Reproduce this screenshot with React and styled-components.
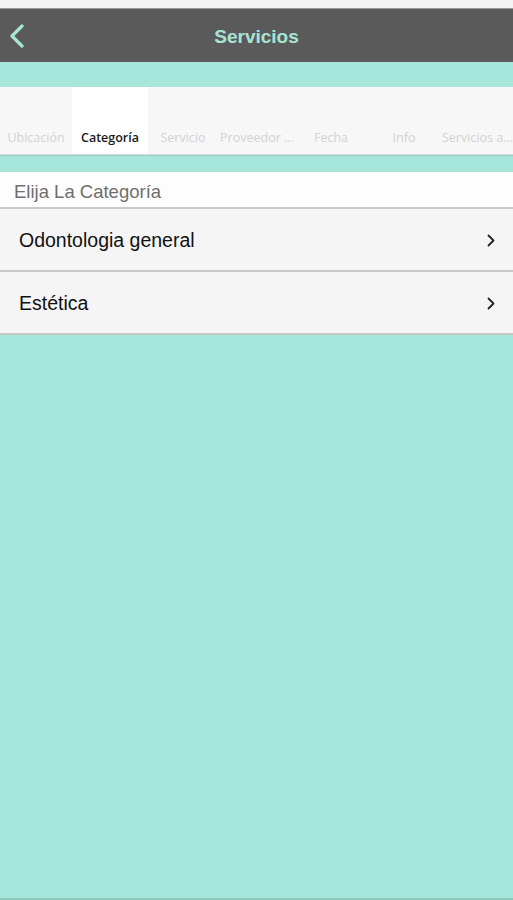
import React from "react";
import styled, { createGlobalStyle } from "styled-components";

const Global = createGlobalStyle`
  html, body { margin: 0; padding: 0; background: #f6f6f6; }
  body { font-family: "Liberation Sans", Arial, sans-serif; }
  * { box-sizing: border-box; }
`;

const Screen = styled.div`
  width: 513px;
  height: 900px;
  display: flex;
  flex-direction: column;
  background: #f6f6f6;
  overflow: hidden;
`;

const StatusStrip = styled.div`
  height: 9px;
  background: #f4f4f4;
  border-bottom: 1px solid #9a9a9a;
`;

const NavBar = styled.div`
  height: 53px;
  background: #5a5a5a;
  display: grid;
  grid-template-columns: 60px 1fr 60px;
  align-items: center;
`;

const BackButton = styled.div`
  display: flex;
  align-items: center;
  padding-left: 9px;
  height: 100%;
`;

const Title = styled.div`
  text-align: center;
  color: #a6e4d6;
  font-size: 19px;
  font-weight: bold;
  padding-top: 2px;
`;

const Body = styled.div`
  flex: 1;
  background: #a7e6db;
  display: flex;
  flex-direction: column;
  border-bottom: 2px solid #8fc9bd;
`;

const Spacer = styled.div`
  height: ${(p) => p.h}px;
`;

const TabStrip = styled.div`
  height: 68px;
  background: #f7f7f7;
  display: flex;
  border-bottom: 1px solid #d6d6d6;
  box-shadow: 0 1px 1px rgba(0, 0, 0, 0.08);
`;

const Tab = styled.div`
  width: ${(p) => p.w}px;
  flex: none;
  background: ${(p) => (p.active ? "#ffffff" : "transparent")};
  display: flex;
  align-items: flex-end;
  justify-content: center;
  padding-bottom: 8px;
  font-family: "Open Sans", "Liberation Sans", sans-serif;
  font-size: 12.5px;
  font-weight: ${(p) => (p.active ? 600 : 400)};
  color: ${(p) => (p.active ? "#1a1a1a" : "#d2d2d2")};
  white-space: nowrap;
  overflow: hidden;
`;

const SectionHeader = styled.div`
  height: 37px;
  background: #fdfdfd;
  border-bottom: 2px solid #c9c9c9;
  display: flex;
  align-items: center;
  padding-left: 14px;
  font-size: 18.5px;
  color: #6f6f6f;
  padding-top: 4px;
`;

const Row = styled.div`
  height: 63px;
  background: #f5f5f5;
  border-bottom: 2px solid #c8c8c8;
  display: flex;
  align-items: center;
  justify-content: space-between;
  padding: 1px 18px 0 19px;
  font-size: 19.5px;
  color: #111;
`;

const Chevron = ({ color = "#222", w = 8, h = 13, sw = 1.8 }) => (
  <svg width={w} height={h} viewBox="0 0 8 13" fill="none">
    <path d="M1.5 1.5 L6.5 6.5 L1.5 11.5" stroke={color} strokeWidth={sw} strokeLinecap="round" strokeLinejoin="round" />
  </svg>
);

const BackIcon = () => (
  <svg width="16" height="24" viewBox="0 0 16 24" fill="none">
    <path d="M13 2 L3 12 L13 22" stroke="#a6e4d6" strokeWidth="3.2" strokeLinecap="round" strokeLinejoin="round" />
  </svg>
);

const tabs = [
  { label: "Ubicación", w: 72 },
  { label: "Categoría", w: 76, active: true },
  { label: "Servicio", w: 70 },
  { label: "Proveedor ...", w: 78 },
  { label: "Fecha", w: 70 },
  { label: "Info", w: 76 },
  { label: "Servicios a...", w: 71 },
];

const rows = ["Odontologia general", "Estética"];

export default function App() {
  return (
    <Screen>
      <Global />
      <StatusStrip />
      <NavBar>
        <BackButton>
          <BackIcon />
        </BackButton>
        <Title>Servicios</Title>
        <div />
      </NavBar>
      <Body>
        <Spacer h={25} />
        <TabStrip>
          {tabs.map((t) => (
            <Tab key={t.label} w={t.w} active={t.active}>
              {t.label}
            </Tab>
          ))}
        </TabStrip>
        <Spacer h={17} />
        <SectionHeader>Elija La Categoría</SectionHeader>
        {rows.map((r) => (
          <Row key={r}>
            <span>{r}</span>
            <Chevron />
          </Row>
        ))}
      </Body>
    </Screen>
  );
}
